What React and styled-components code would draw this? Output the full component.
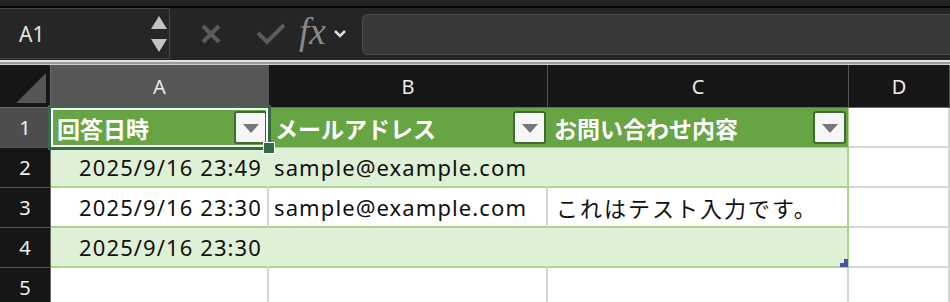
import React from "react";
import styled, { createGlobalStyle } from "styled-components";

const GlobalStyle = createGlobalStyle`
  html, body {
    margin: 0;
    padding: 0;
    background: #ffffff;
    overflow: hidden;
  }
  body {
    font-family: "Noto Sans", "Noto Sans CJK JP", sans-serif;
  }
`;

const Window = styled.div`
  width: 950px;
  height: 302px;
  overflow: hidden;
  background: #ffffff;
`;

const TopStrip = styled.div`
  height: 6px;
  background: #252525;
  border-bottom: 2px solid #050505;
`;

const FormulaBar = styled.div`
  height: 52px;
  display: flex;
  align-items: center;
  background: #252525;
`;

const NameBox = styled.div`
  box-sizing: border-box;
  width: 170px;
  height: 51px;
  align-self: flex-start;
  display: flex;
  align-items: center;
  justify-content: space-between;
  padding: 0 2px 0 19px;
  background: #262626;
  border: 1px solid #474747;
  border-left: none;
  color: #e2e2e2;
  font-family: "Noto Sans", sans-serif;
  font-size: 21px;
`;

const Spinner = styled.div`
  display: flex;
  flex-direction: column;
  gap: 10px;
`;

const Tools = styled.div`
  display: flex;
  align-items: center;
  width: 192px;
  height: 100%;
  padding-left: 30px;
  box-sizing: border-box;
`;

const ToolIcon = styled.span`
  display: flex;
  align-items: center;
  margin-right: ${(p) => p.$gap}px;
`;

const Fx = styled.span`
  font-family: "Liberation Serif", "DejaVu Serif", serif;
  font-style: italic;
  font-size: 37px;
  line-height: 1;
  color: #8a8a8a;
  margin-right: 7px;
  margin-left: -3px;
  margin-top: -6px;
`;

const FormulaInput = styled.div`
  flex: 1;
  height: 39px;
  background: #393939;
  border: 1px solid #4b4b4b;
  border-right: none;
  border-radius: 6px 0 0 6px;
`;

const Separator = styled.div`
  height: 2px;
  background: #9c9c9c;
  border-top: 2px solid #e4e4e4;
  border-bottom: 1px solid #cfcfcf;
`;

const Sheet = styled.div`
  position: relative;
  display: grid;
  grid-template-columns: 51px 218px 279px 301px 101px;
  grid-template-rows: 43px 40px 40px 40px 40px 40px;
`;

const Corner = styled.div`
  background: #161616;
  border-right: 1px solid #6a6a6a;
  border-bottom: 1px solid #6a6a6a;
  display: flex;
  align-items: flex-end;
  justify-content: flex-end;
  padding: 0 4px 4px 0;
`;

const ColHead = styled.div`
  box-sizing: border-box;
  display: flex;
  align-items: center;
  justify-content: center;
  background: ${(p) => (p.$active ? "#565656" : "#161616")};
  color: #ececec;
  font-family: "Noto Sans", sans-serif;
  font-size: 20px;
  border-right: 1px solid #555;
  border-bottom: ${(p) => (p.$active ? "3px solid #3b7a4b" : "1px solid #6a6a6a")};
  padding-top: ${(p) => (p.$active ? "2px" : "0")};
`;

const RowHead = styled.div`
  box-sizing: border-box;
  display: flex;
  align-items: center;
  justify-content: center;
  background: ${(p) => (p.$active ? "#4d4d4d" : "#161616")};
  color: #f0f0f0;
  font-family: "Noto Sans", sans-serif;
  font-size: 20px;
  border-right: 1px solid #6a6a6a;
  border-bottom: 1px solid #555;
`;

const HeadCell = styled.div`
  box-sizing: border-box;
  display: flex;
  align-items: center;
  justify-content: space-between;
  padding: 0 2px 0 6px;
  background: #67a443;
  color: #ffffff;
  font-family: "Noto Sans CJK JP", sans-serif;
  font-weight: 700;
  font-size: 23px;
  border-bottom: 1px solid #a8d78b;
  border-right: ${(p) => (p.$last ? "1px solid #a8d78b" : "none")};
`;

const FilterButton = styled.div`
  box-sizing: border-box;
  width: 33px;
  height: 33px;
  display: flex;
  align-items: center;
  justify-content: center;
  background: #f6f6f6;
  border: 2px solid #3d6b32;
  border-radius: 3px;
  &::after {
    content: "";
    border-left: 8px solid transparent;
    border-right: 8px solid transparent;
    border-top: 9px solid #777777;
    margin-top: 2px;
  }
`;

const Cell = styled.div`
  box-sizing: border-box;
  display: flex;
  align-items: center;
  justify-content: ${(p) => (p.$right ? "flex-end" : "flex-start")};
  padding: ${(p) => (p.$right ? "0 5px 0 0" : `0 0 0 ${p.$jp ? 8 : 5}px`)};
  background: ${(p) => (p.$band ? "#def0d5" : "#ffffff")};
  color: #111111;
  font-size: 22px;
  letter-spacing: ${(p) => (p.$jp ? "2px" : "1.1px")};
  white-space: nowrap;
  border-bottom: 2px solid ${(p) => (p.$table ? "#a8d78b" : "#d6d6d6")};
  border-right: 2px solid
    ${(p) =>
      p.$edge ? "#a8d78b" : p.$band && !p.$last ? "transparent" : "#d6d6d6"};
`;

const Selection = styled.div`
  position: absolute;
  left: 48px;
  top: 40px;
  width: 223px;
  height: 45px;
  box-sizing: border-box;
  border: 3px solid #356b46;
  box-shadow: inset 0 0 0 2px #ffffff;
  pointer-events: none;
`;

const FillHandle = styled.div`
  position: absolute;
  left: 263px;
  top: 77px;
  width: 10px;
  height: 10px;
  background: #356b46;
  border: 1px solid #ffffff;
`;

const ResizeMark = styled.div`
  position: absolute;
  left: 840px;
  top: 194px;
  width: 8px;
  height: 8px;
  background: #4a52a8;
  clip-path: polygon(100% 0, 100% 100%, 0 100%, 0 50%, 50% 50%, 50% 0);
`;

const columns = ["A", "B", "C", "D"];
const headers = ["回答日時", "メールアドレス", "お問い合わせ内容"];
const rows = [
  ["2025/9/16 23:49", "sample@example.com", ""],
  ["2025/9/16 23:30", "sample@example.com", "これはテスト入力です。"],
  ["2025/9/16 23:30", "", ""],
];

function App() {
  return (
    <Window>
      <GlobalStyle />
      <TopStrip />
      <FormulaBar>
        <NameBox>
          A1
          <Spinner>
            <svg width="16" height="13" viewBox="0 0 16 13">
              <path d="M8 0 L16 13 L0 13 Z" fill="#c4c4c4" />
            </svg>
            <svg width="16" height="13" viewBox="0 0 16 13">
              <path d="M0 0 L16 0 L8 13 Z" fill="#c4c4c4" />
            </svg>
          </Spinner>
        </NameBox>
        <Tools>
          <ToolIcon $gap={34}>
            <svg width="22" height="22" viewBox="0 0 22 22">
              <path d="M3 3 L19 19 M19 3 L3 19" stroke="#5c5c5c" strokeWidth="4" />
            </svg>
          </ToolIcon>
          <ToolIcon $gap={16}>
            <svg width="30" height="22" viewBox="0 0 30 22">
              <path d="M2 10 L11 19 L28 2" stroke="#5c5c5c" strokeWidth="4" fill="none" />
            </svg>
          </ToolIcon>
          <Fx>fx</Fx>
          <ToolIcon $gap={4}>
            <svg width="14" height="10" viewBox="0 0 14 10">
              <path d="M2 2 L7 7 L12 2" stroke="#dddddd" strokeWidth="2.5" fill="none" />
            </svg>
          </ToolIcon>
        </Tools>
        <FormulaInput />
      </FormulaBar>
      <Separator />
      <Sheet>
        <Corner>
          <svg width="30" height="30" viewBox="0 0 30 30">
            <path d="M30 0 L30 30 L0 30 Z" fill="#555555" />
          </svg>
        </Corner>
        {columns.map((c, i) => (
          <ColHead key={c} $active={i === 0}>
            {c}
          </ColHead>
        ))}

        <RowHead $active>1</RowHead>
        {headers.map((h, i) => (
          <HeadCell key={h} $last={i === headers.length - 1}>
            {h}
            <FilterButton />
          </HeadCell>
        ))}
        <Cell />

        {rows.map((r, ri) => {
          const band = ri % 2 === 0;
          return (
            <React.Fragment key={ri}>
              <RowHead>{ri + 2}</RowHead>
              {r.map((v, ci) => (
                <Cell
                  key={ci}
                  $table
                  $band={band}
                  $right={ci === 0}
                  $jp={ci === 2}
                  $last={ci === r.length - 1}
                  $edge={ci === r.length - 1}
                >
                  {v}
                </Cell>
              ))}
              <Cell />
            </React.Fragment>
          );
        })}

        <RowHead>5</RowHead>
        <Cell />
        <Cell />
        <Cell />
        <Cell />

        <Selection />
        <FillHandle />
        <ResizeMark />
      </Sheet>
    </Window>
  );
}

export default App;
